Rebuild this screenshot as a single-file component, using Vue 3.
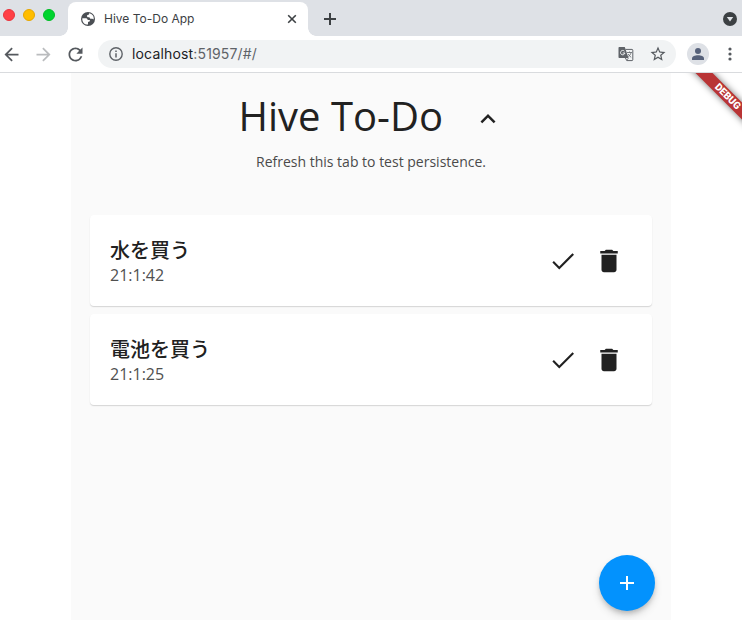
<script setup>
const todos = [
  { id: 1, title: '水を買う', time: '21:1:42' },
  { id: 2, title: '電池を買う', time: '21:1:25' },
]
</script>

<template>
  <div class="browser">
    <div class="tabstrip">
      <div class="lights">
        <i class="light red"></i><i class="light yellow"></i><i class="light green"></i>
      </div>
      <div class="tab">
        <svg class="globe" viewBox="0 0 16 16" width="16" height="16">
          <circle cx="8" cy="8" r="7" fill="#4b4f54" />
          <path d="M2.3 7.2h3.2c1.400 0 2 .7 2.200 1.700h1.600c.9 0 1 1.200 0 1.500l-1.300.5v2.700C4.700 13.800 2 11.200 2.300 7.200zM9 2.300c.3 1-.2 1.500-1.200 1.600-.9.100-1 .8-.7 1.500.3.800 1.200.7 2 .8.800.2.700 1.200 1.500 1.600.9.500 2.200-.1 3.100.7.500-3.400-1.700-5.800-4.700-6.200z" fill="#fff" />
        </svg>
        <span class="tab-title">Hive To-Do App</span>
        <svg class="close" viewBox="0 0 10 10" width="10" height="10">
          <path d="M1.200 1.200l7.600 7.600M8.800 1.200L1.200 8.800" stroke="#3c4043" stroke-width="1.600" />
        </svg>
      </div>
      <svg class="newtab" viewBox="0 0 12 12" width="12" height="12">
        <path d="M6 0v12M0 6h12" stroke="#3c4043" stroke-width="2" />
      </svg>
      <svg class="tabmenu" viewBox="0 0 14 14" width="14" height="14">
        <circle cx="7" cy="7" r="7" fill="#3c4043" />
        <path d="M3.800 5h6.400L7 9.600z" fill="#e1e4e8" />
      </svg>
    </div>

    <div class="toolbar">
      <svg class="nav" viewBox="0 0 24 24" width="21" height="21">
        <path d="M20 11H7.830l5.590-5.590L12 4l-8 8 8 8 1.410-1.410L7.830 13H20v-2z" fill="#55595e" />
      </svg>
      <svg class="nav" viewBox="0 0 24 24" width="21" height="21">
        <path d="M12 4l-1.410 1.410L16.170 11H4v2h12.170l-5.580 5.590L12 20l8-8z" fill="#babcbe" />
      </svg>
      <svg class="nav" viewBox="0 0 24 24" width="21" height="21">
        <path d="M17.650 6.350A7.958 7.958 0 0 0 12 4c-4.420 0-7.990 3.580-7.990 8s3.570 8 7.990 8c3.730 0 6.840-2.550 7.730-6h-2.080A5.990 5.990 0 0 1 12 18c-3.310 0-6-2.690-6-6s2.690-6 6-6c1.660 0 3.140.69 4.220 1.780L13 11h7V4l-2.350 2.350z" fill="#55595e" />
      </svg>
      <div class="omnibox">
        <svg viewBox="0 0 14 14" width="14" height="14">
          <circle cx="7" cy="7" r="6.200" fill="none" stroke="#5f6368" stroke-width="1.400" />
          <path d="M7 6.200v4.200M7 3.500v1.500" stroke="#5f6368" stroke-width="1.500" />
        </svg>
        <span class="url"><b>localhost</b>:51957/#/</span>
        <svg class="translate" viewBox="0 0 16 16" width="16" height="16">
          <path d="M1.500 1h5.300l3.700 11H1.500C.8 12 .5 11.700.5 11V2c0-.7.300-1 1-1z" fill="#5f6368" />
          <path d="M7.600 3.400H14c.5 0 .8.300.8.800v9.600c0 .5-.3.800-.8.800H8.800L7.400 12" fill="none" stroke="#5f6368" />
          <path d="M6.400 5.200A2.200 2.200 0 1 0 6.900 7H4.700" fill="none" stroke="#f1f3f4" />
          <path d="M9 6.500h5M11.500 5.500v1M13 6.600c-.3 1.600-1.300 3-2.700 4.200M10.200 8c.6 1.300 1.700 2.500 3 3.300M10.500 12l-1.800 2.300" fill="none" stroke="#5f6368" stroke-width=".8" />
        </svg>
        <svg class="star" viewBox="0 0 24 24" width="18" height="18">
          <path d="M22 9.240l-7.190-.62L12 2 9.190 8.630 2 9.240l5.460 4.730L5.820 21 12 17.270 18.180 21l-1.630-7.030L22 9.240zM12 15.400l-3.760 2.270 1-4.280-3.320-2.880 4.380-.38L12 6.100l1.710 4.040 4.380.38-3.320 2.880 1 4.280L12 15.400z" fill="#55595e" />
        </svg>
      </div>
      <div class="avatar">
        <svg viewBox="0 0 12 12" width="12" height="12">
          <circle cx="6" cy="3" r="3" fill="#56617a" />
          <path d="M0 12v-1.500C0 8.500 3 7.300 6 7.300s6 1.200 6 3.200V12z" fill="#56617a" />
        </svg>
      </div>
      <svg class="dots" viewBox="0 0 4 14" width="4" height="14">
        <circle cx="2" cy="2" r="1.600" /><circle cx="2" cy="7" r="1.600" /><circle cx="2" cy="12" r="1.600" />
      </svg>
    </div>

    <div class="viewport">
      <main class="app">
        <header class="heading">
          <h1>Hive To-Do</h1>
          <svg viewBox="0 0 24 24" width="30" height="30">
            <path d="M12 8l-6 6 1.410 1.410L12 10.830l4.590 4.580L18 14z" fill="#212121" />
          </svg>
        </header>
        <p class="hint">Refresh this tab to test persistence.</p>
        <ul class="list">
          <li v-for="todo in todos" :key="todo.id" class="card">
            <div class="info">
              <div class="title">{{ todo.title }}</div>
              <div class="time">{{ todo.time }}</div>
            </div>
            <svg class="check" viewBox="0 0 24 24" width="30" height="30">
              <path d="M9 16.300L4.700 12l-1.200 1.200L9 18.700 20.800 6.900l-1.200-1.200z" fill="#212121" />
            </svg>
            <svg class="trash" viewBox="0 0 24 24" width="30" height="30">
              <path d="M6 19c0 1.100.9 2 2 2h8c1.100 0 2-.9 2-2V7H6v12zM19 4h-3.500l-1-1h-5l-1 1H5v2h14V4z" fill="#212121" />
            </svg>
          </li>
        </ul>
        <button class="fab" aria-label="Add">
          <svg viewBox="0 0 14 14" width="14" height="14">
            <path d="M7 0v14M0 7h14" stroke="#fff" stroke-width="2" />
          </svg>
        </button>
      </main>
      <div class="banner">DEBUG</div>
    </div>
  </div>
</template>

<style>
body {
  margin: 0;
  background: #fff;
}
</style>

<style scoped>
.browser {
  display: flex;
  flex-direction: column;
  width: 742px;
  height: 620px;
  overflow: hidden;
  font-family: "Open Sans", "Noto Sans CJK JP", sans-serif;
}
svg {
  display: block;
  flex: none;
}
.tabstrip {
  display: flex;
  height: 36px;
  flex: none;
  background: #dee1e6;
}
.lights {
  display: flex;
  gap: 8px;
  width: 68px;
  box-sizing: border-box;
  padding: 9px 0 0 3px;
}
.light {
  width: 12px;
  height: 12px;
  box-sizing: border-box;
  border-radius: 50%;
  border: 1px solid #e9343d;
}
.red { background: #ff4046; }
.yellow { background: #ffbd00; border-color: #e6a600; }
.green { background: #00d42f; border-color: #00bd26; }
.tab {
  position: relative;
  display: flex;
  align-items: center;
  width: 240px;
  height: 34px;
  margin-top: 2px;
  box-sizing: border-box;
  padding: 0 11px 0 12px;
  border-radius: 8px 8px 0 0;
  background: #fff;
  font-family: Inter, sans-serif;
  font-size: 12px;
  color: #3c4043;
}
.tab::before,
.tab::after {
  content: "";
  position: absolute;
  bottom: 0;
  width: 8px;
  height: 8px;
}
.tab::before {
  left: -8px;
  background: radial-gradient(circle at 0 0, transparent 7.500px, #fff 8px);
}
.tab::after {
  right: -8px;
  background: radial-gradient(circle at 100% 0, transparent 7.500px, #fff 8px);
}
.tab-title {
  flex: 1;
  margin-left: 8px;
  padding-bottom: 2px;
}
.newtab { margin: 13px 0 0 16px; }
.tabmenu { margin: 12px 5px 0 auto; }
.toolbar {
  display: flex;
  align-items: center;
  height: 37px;
  flex: none;
  box-sizing: border-box;
  padding: 0 10px 0 1px;
  border-bottom: 1px solid #d9dbde;
  background: #fff;
}
.nav { margin-right: 11px; }
.omnibox {
  display: flex;
  align-items: center;
  width: 578px;
  height: 28px;
  box-sizing: border-box;
  padding: 0 9px 0 11px;
  margin-left: 1px;
  border-radius: 14px;
  background: #f1f3f4;
}
.url {
  margin-left: 9px;
  padding-bottom: 2px;
  flex: 1;
  font-family: Inter, sans-serif;
  font-size: 14px;
  letter-spacing: .16px;
  color: #5f6368;
}
.url b {
  font-weight: 400;
  color: #202124;
}
.translate { margin-right: 15px; }
.avatar {
  display: flex;
  align-items: center;
  justify-content: center;
  width: 22px;
  height: 22px;
  margin-left: 11px;
  border-radius: 50%;
  background: #dee1e6;
}
.dots {
  margin-left: auto;
  fill: #55595e;
}
.viewport {
  position: relative;
  display: flex;
  flex: 1;
  justify-content: center;
  overflow: hidden;
}
.app {
  position: relative;
  width: 600px;
  box-sizing: border-box;
  padding: 0 19px;
  background: #fafafa;
}
.heading {
  display: flex;
  align-items: center;
  height: 86px;
  padding-left: 148.500px;
}
h1 {
  width: 234px;
  margin: 0;
  font-size: 40px;
  line-height: 54px;
  font-weight: 400;
  color: #212121;
  white-space: nowrap;
}
.heading svg { margin-top: 5px; }
.hint {
  height: 20px;
  margin: -7px 0 43px;
  font-size: 14px;
  line-height: 20px;
  text-align: center;
  color: #4a4a4a;
}
.list {
  display: flex;
  flex-direction: column;
  gap: 8px;
  margin: 0;
  padding: 0;
  list-style: none;
}
.card {
  display: flex;
  align-items: center;
  height: 91px;
  box-sizing: border-box;
  padding: 0 28px 0 20px;
  border-radius: 4px;
  background: #fff;
  box-shadow: 0 1px 1px rgba(0, 0, 0, .12), 0 1px 2px rgba(0, 0, 0, .04);
}
.info {
  flex: 1;
  padding-top: 4px;
}
.title {
  font-size: 20px;
  line-height: 25px;
  font-weight: 500;
  color: #212121;
}
.time {
  font-size: 16px;
  line-height: 24px;
  color: #505050;
}
.check { margin-right: 16px; }
.fab {
  position: absolute;
  right: 16px;
  bottom: 9px;
  display: flex;
  align-items: center;
  justify-content: center;
  width: 56px;
  height: 56px;
  padding: 0;
  border: 0;
  border-radius: 50%;
  background: #0392fd;
  box-shadow: 0 3px 5px -1px rgba(0, 0, 0, .2), 0 5px 9px rgba(0, 0, 0, .12);
}
.banner {
  position: absolute;
  top: 18px;
  right: -46px;
  width: 120px;
  height: 12px;
  box-sizing: border-box;
  padding-right: 1px;
  transform: rotate(45deg);
  background: #b93435;
  box-shadow: 0 0 7px rgba(0, 0, 0, .55);
  font-family: Roboto, sans-serif;
  font-size: 10px;
  line-height: 12px;
  font-weight: 900;
  text-align: center;
  color: #fff;
}
</style>
